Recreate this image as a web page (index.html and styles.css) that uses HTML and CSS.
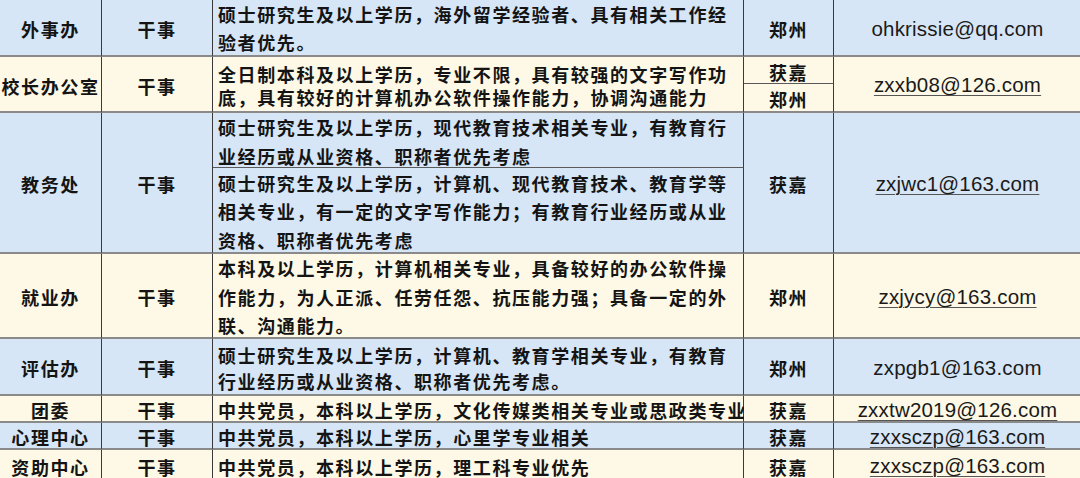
FILE: index.html
```html
<!DOCTYPE html>
<html lang="zh">
<head>
<meta charset="utf-8">
<link rel="stylesheet" href="styles.css">
</head>
<body>
<div class="jobs">
  <div class="cell k1 blue">外事办</div>
  <div class="cell k2 blue">干事</div>
  <div class="cell k3 blue lh28 top0">硕士研究生及以上学历，海外留学经验者、具有相关工作经<br>验者优先。</div>
  <div class="cell k4 blue">郑州</div>
  <div class="cell k5 blue mail">ohkrissie@qq.com</div>

  <div class="cell k1 yellow span2">校长办公室</div>
  <div class="cell k2 yellow span2">干事</div>
  <div class="cell k3 yellow span2 lh23">全日制本科及以上学历，专业不限，具有较强的文字写作功<br>底，具有较好的计算机办公软件操作能力，协调沟通能力</div>
  <div class="cell k4 yellow sub">获嘉</div>
  <div class="cell k5 yellow span2 mail"><u>zxxb08@126.com</u></div>
  <div class="cell k4 yellow">郑州</div>

  <div class="cell k1 blue span2">教务处</div>
  <div class="cell k2 blue span2">干事</div>
  <div class="cell k3 blue sub lh28">硕士研究生及以上学历，现代教育技术相关专业，有教育行<br>业经历或从业资格、职称者优先考虑</div>
  <div class="cell k4 blue span2">获嘉</div>
  <div class="cell k5 blue span2 mail"><u>zxjwc1@163.com</u></div>
  <div class="cell k3 blue lh28">硕士研究生及以上学历，计算机、现代教育技术、教育学等<br>相关专业，有一定的文字写作能力；有教育行业经历或从业<br>资格、职称者优先考虑</div>

  <div class="cell k1 yellow">就业办</div>
  <div class="cell k2 yellow">干事</div>
  <div class="cell k3 yellow lh28">本科及以上学历，计算机相关专业，具备较好的办公软件操<br>作能力，为人正派、任劳任怨、抗压能力强；具备一定的外<br>联、沟通能力。</div>
  <div class="cell k4 yellow">郑州</div>
  <div class="cell k5 yellow mail"><u>zxjycy@163.com</u></div>

  <div class="cell k1 blue">评估办</div>
  <div class="cell k2 blue">干事</div>
  <div class="cell k3 blue lh26">硕士研究生及以上学历，计算机、教育学相关专业，有教育<br>行业经历或从业资格、职称者优先考虑。</div>
  <div class="cell k4 blue">郑州</div>
  <div class="cell k5 blue mail">zxpgb1@163.com</div>

  <div class="cell k1 yellow">团委</div>
  <div class="cell k2 yellow">干事</div>
  <div class="cell k3 yellow">中共党员，本科以上学历，文化传媒类相关专业或思政类专业</div>
  <div class="cell k4 yellow">获嘉</div>
  <div class="cell k5 yellow mail"><u>zxxtw2019@126.com</u></div>

  <div class="cell k1 blue">心理中心</div>
  <div class="cell k2 blue">干事</div>
  <div class="cell k3 blue">中共党员，本科以上学历，心里学专业相关</div>
  <div class="cell k4 blue">获嘉</div>
  <div class="cell k5 blue mail"><u>zxxsczp@163.com</u></div>

  <div class="cell k1 yellow">资助中心</div>
  <div class="cell k2 yellow">干事</div>
  <div class="cell k3 yellow">中共党员，本科以上学历，理工科专业优先</div>
  <div class="cell k4 yellow">获嘉</div>
  <div class="cell k5 yellow mail"><u>zxxsczp@163.com</u></div>
</div>
</body>
</html>
```

FILE: styles.css
```css
html, body {
  margin: 0;
  padding: 0;
  overflow: hidden;
  background: #fdf9e6;
}

.jobs {
  width: 1080px;
  display: grid;
  grid-template-columns: 102px 111px 531px 90px 246px;
  grid-template-rows: 57px 27px 29px 55px 86px 85px 57px 27px 27px 32px;
  font-family: "Noto Sans CJK SC", "Noto Sans", sans-serif;
  font-weight: 700;
  font-size: 18px;
  color: #141414;
}

.cell {
  box-sizing: border-box;
  display: flex;
  align-items: center;
  justify-content: center;
  min-height: 0;
  padding-top: 3px;
  border-right: 1px solid #3a3a3a;
  border-bottom: 2px solid #8a8a8a;
  line-height: 24px;
  letter-spacing: 1.6px;
  white-space: nowrap;
}

.k1 { grid-column: 1; }
.k2 { grid-column: 2; }
.k3 {
  grid-column: 3;
  justify-content: flex-start;
  padding-left: 5px;
}
.k4 { grid-column: 4; }
.k5 { grid-column: 5; border-right: none; padding-left: 1px; }

.span2 { grid-row: span 2; }

.blue { background: #d6e6f6; }
.yellow { background: #fdf9e6; }

.lh28 { line-height: 28.5px; }
.lh23 { line-height: 23px; }
.lh26 { line-height: 26px; }
.top0 { padding-top: 1px; }

.sub { border-bottom: 1px solid #5a5a5a; }

.mail {
  font-family: "Liberation Sans", Arial, sans-serif;
  font-weight: 400;
  font-size: 20.5px;
  letter-spacing: 0.2px;
  color: #1a1a1a;
  padding-top: 2px;
}

.mail u {
  text-decoration-color: #555;
  text-decoration-thickness: 1px;
  text-underline-offset: 3px;
}
```
